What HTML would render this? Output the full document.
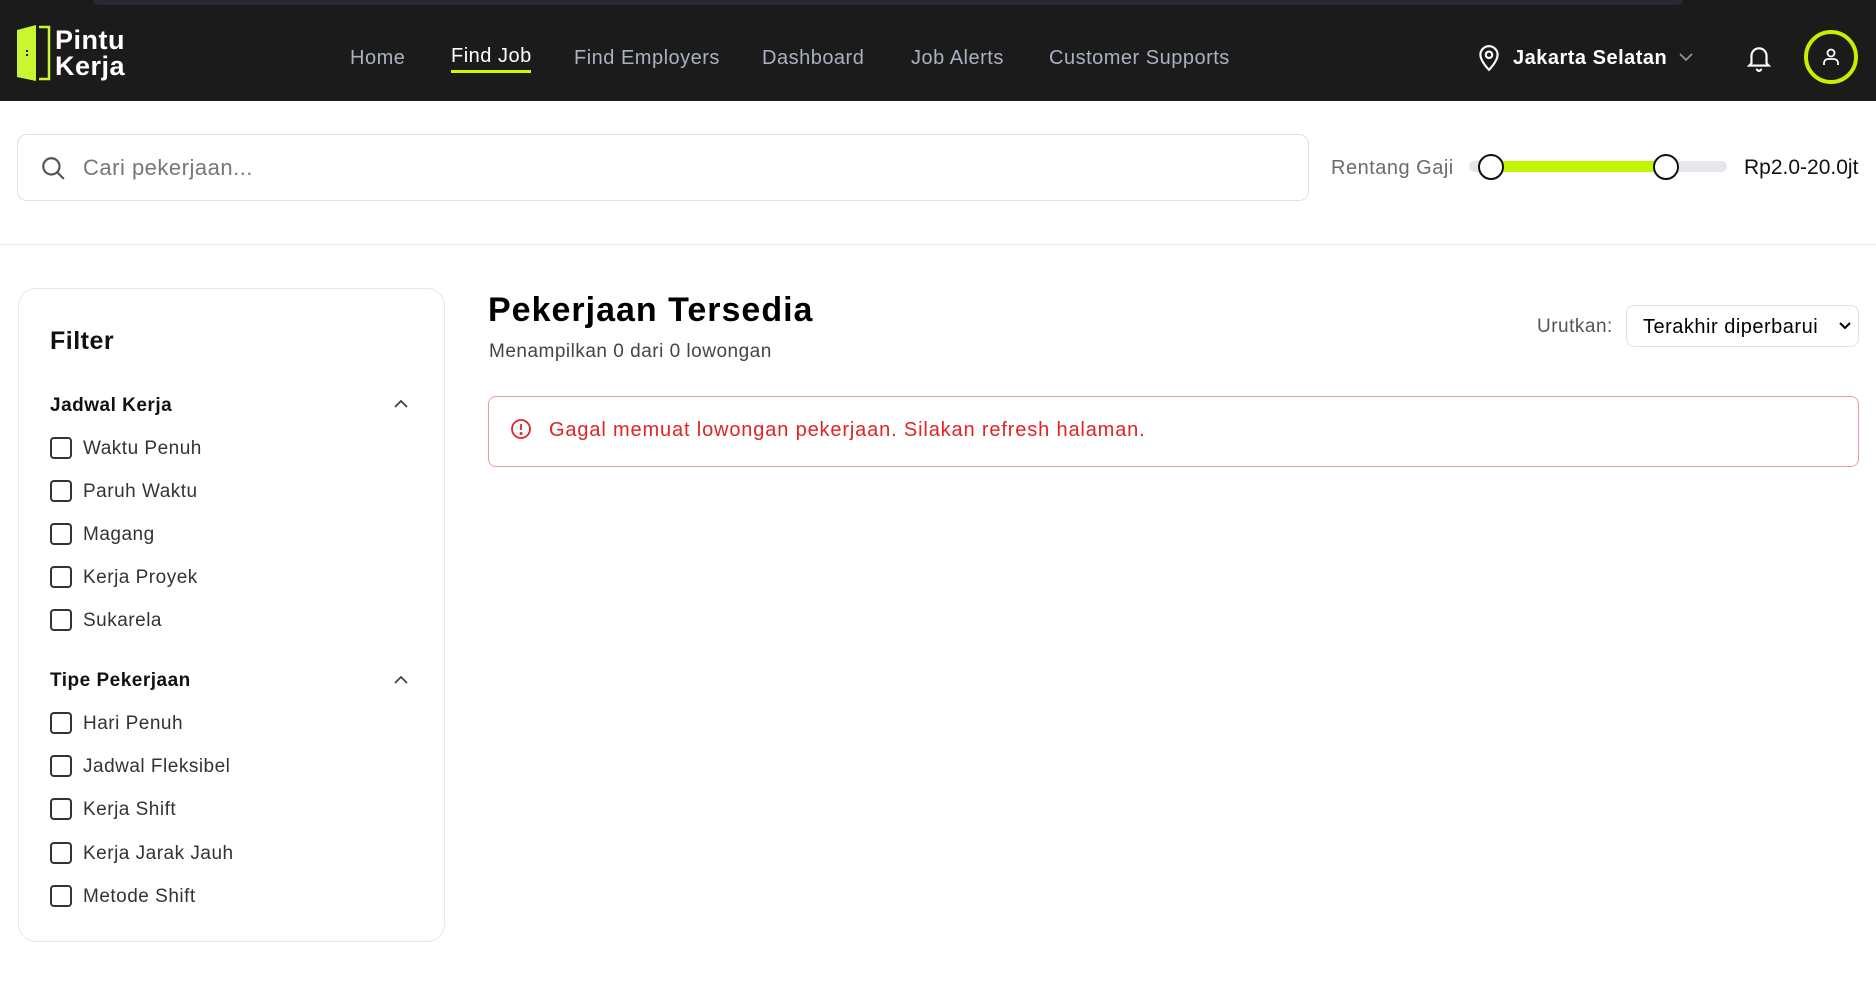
<!DOCTYPE html>
<html><head><meta charset="utf-8"><style>
*{box-sizing:border-box;margin:0;padding:0}
body{width:1876px;height:994px;background:#fff;font-family:"Liberation Sans",sans-serif;position:relative;overflow:hidden;color:#111;letter-spacing:0.5px}
.a{position:absolute;white-space:nowrap}
.hdr{position:absolute;left:0;top:0;width:1876px;height:101px;background:#1b1b1b}
.strip{position:absolute;left:93px;top:0;width:1590px;height:5px;background:#272a31;border-radius:0 0 6px 6px}
.nav{top:47px;font-size:20px;color:#a9b2c0}
.cb{position:absolute;left:50px;width:22px;height:22px;border:2px solid #333;border-radius:4px}
.lbl{left:83px;font-size:19px;color:#333;margin-top:1px}
</style></head><body>
<div class="hdr"><div class="strip"></div>
<svg class="a" style="left:16px;top:24px" width="40" height="58" viewBox="0 0 40 58"><path d="M1 6 L20 1 L20 57 L1 53Z" fill="#c9f531"/><rect x="10" y="26" width="2" height="2" fill="#1b1b1b"/><rect x="10" y="30" width="2" height="2" fill="#1b1b1b"/><path d="M23 3 H33 V55 H23" fill="none" stroke="#c9f531" stroke-width="2.5"/></svg>
<div class="a" style="left:55px;top:27px;font-size:27px;font-weight:bold;color:#fff;line-height:26px">Pintu<br>Kerja</div>
<div class="a nav" style="left:350px">Home</div>
<div class="a nav" style="left:451px;color:#fff;top:45px">Find Job</div>
<div class="a" style="left:451px;top:70px;width:80px;height:3px;background:#d4f500"></div>
<div class="a nav" style="left:574px">Find Employers</div>
<div class="a nav" style="left:762px">Dashboard</div>
<div class="a nav" style="left:911px">Job Alerts</div>
<div class="a nav" style="left:1049px">Customer Supports</div>
<svg class="a" style="left:1476px;top:44px" width="26" height="28" viewBox="0 0 24 26" fill="none" stroke="#fff" stroke-width="2"><path d="M12 24 C12 24 20 16 20 10 A8 8 0 0 0 4 10 C4 16 12 24 12 24Z"/><circle cx="12" cy="10" r="3"/></svg>
<div class="a" style="left:1513px;top:47px;font-size:20px;font-weight:bold;color:#fff">Jakarta Selatan</div>
<svg class="a" style="left:1678px;top:52px" width="16" height="10" viewBox="0 0 16 10" fill="none" stroke="#999" stroke-width="1.6"><path d="M2 2 L8 8 L14 2"/></svg>
<svg class="a" style="left:1746px;top:44px" width="26" height="28" viewBox="0 0 24 26" fill="none" stroke="#fff" stroke-width="2"><path d="M5 18 V11 A7 7 0 0 1 19 11 V18 L21 20 H3Z"/><path d="M10 23 A2 2 0 0 0 14 23"/></svg>
<div class="a" style="left:1804px;top:30px;width:54px;height:54px;border:4px solid #c6f000;border-radius:50%"></div>
<svg class="a" style="left:1822px;top:47px" width="18" height="20" viewBox="0 0 18 20" fill="none" stroke="#fff" stroke-width="1.8"><circle cx="9" cy="6" r="3.5"/><path d="M2 18 V16 A4 4 0 0 1 6 12 H12 A4 4 0 0 1 16 16 V18"/></svg>
</div>
<div class="a" style="left:17px;top:134px;width:1292px;height:67px;border:1px solid #dfe1e5;border-radius:10px"></div>
<svg class="a" style="left:40px;top:155px" width="26" height="26" viewBox="0 0 24 24" fill="none" stroke="#555" stroke-width="2"><circle cx="10.5" cy="10.5" r="7.5"/><path d="M16 16 L22 22"/></svg>
<div class="a" style="left:83px;top:155px;font-size:22px;color:#777">Cari pekerjaan...</div>
<div class="a" style="left:1331px;top:157px;font-size:20px;color:#6b6b6b">Rentang Gaji</div>
<div class="a" style="left:1469px;top:161px;width:258px;height:11px;background:#e5e7eb;border-radius:6px"></div>
<div class="a" style="left:1491px;top:161px;width:175px;height:11px;background:#c2f500"></div>
<div class="a" style="left:1478px;top:154px;width:26px;height:26px;border:2.5px solid #111;border-radius:50%;background:#fff"></div>
<div class="a" style="left:1653px;top:154px;width:26px;height:26px;border:2.5px solid #111;border-radius:50%;background:#fff"></div>
<div class="a" style="left:1744px;top:156px;font-size:21px;color:#111;letter-spacing:0">Rp2.0-20.0jt</div>
<div class="a" style="left:0;top:244px;width:1876px;height:1px;background:#e5e7eb"></div>
<div class="a" style="left:18px;top:288px;width:427px;height:654px;border:1px solid #e5e7eb;border-radius:18px"></div>
<div class="a" style="left:50px;top:327px;font-size:25px;font-weight:bold">Filter</div>
<div class="a" style="left:50px;top:395px;font-size:19px;font-weight:bold;color:#111">Jadwal Kerja</div>
<svg class="a" style="left:394px;top:399px" width="14" height="9" viewBox="0 0 14 9" fill="none" stroke="#444" stroke-width="1.8"><path d="M1 8 L7 2 L13 8"/></svg>
<div class="cb" style="top:437px"></div><div class="a lbl" style="top:437px">Waktu Penuh</div>
<div class="cb" style="top:480px"></div><div class="a lbl" style="top:480px">Paruh Waktu</div>
<div class="cb" style="top:523px"></div><div class="a lbl" style="top:523px">Magang</div>
<div class="cb" style="top:566px"></div><div class="a lbl" style="top:566px">Kerja Proyek</div>
<div class="cb" style="top:609px"></div><div class="a lbl" style="top:609px">Sukarela</div>
<div class="a" style="left:50px;top:670px;font-size:19px;font-weight:bold;color:#111">Tipe Pekerjaan</div>
<svg class="a" style="left:394px;top:675px" width="14" height="9" viewBox="0 0 14 9" fill="none" stroke="#444" stroke-width="1.8"><path d="M1 8 L7 2 L13 8"/></svg>
<div class="cb" style="top:712px"></div><div class="a lbl" style="top:712px">Hari Penuh</div>
<div class="cb" style="top:755px"></div><div class="a lbl" style="top:755px">Jadwal Fleksibel</div>
<div class="cb" style="top:798px"></div><div class="a lbl" style="top:798px">Kerja Shift</div>
<div class="cb" style="top:842px"></div><div class="a lbl" style="top:842px">Kerja Jarak Jauh</div>
<div class="cb" style="top:885px"></div><div class="a lbl" style="top:885px">Metode Shift</div>
<div class="a" style="left:488px;top:291px;font-size:34px;font-weight:bold;color:#000;letter-spacing:1px">Pekerjaan Tersedia</div>
<div class="a" style="left:489px;top:341px;font-size:19px;color:#444">Menampilkan 0 dari 0 lowongan</div>
<div class="a" style="left:1537px;top:316px;font-size:19px;color:#555">Urutkan:</div>
<div class="a" style="left:1626px;top:305px;width:233px;height:42px;border:1px solid #dfe1e5;border-radius:8px"></div>
<div class="a" style="left:1643px;top:316px;font-size:20px;color:#000">Terakhir diperbarui</div>
<svg class="a" style="left:1839px;top:322px" width="12" height="8" viewBox="0 0 12 8" fill="none" stroke="#000" stroke-width="2"><path d="M1 1 L6 6 L11 1"/></svg>
<div class="a" style="left:488px;top:396px;width:1371px;height:71px;border:1.5px solid #f19a9a;border-radius:8px"></div>
<svg class="a" style="left:510px;top:418px" width="22" height="22" viewBox="0 0 22 22" fill="none" stroke="#e02424" stroke-width="1.8"><circle cx="11" cy="11" r="9"/><path d="M11 6 V12"/><circle cx="11" cy="15.5" r="0.6" fill="#e02424"/></svg>
<div class="a" style="left:549px;top:419px;font-size:20px;color:#e02424;letter-spacing:0.85px">Gagal memuat lowongan pekerjaan. Silakan refresh halaman.</div>
</body></html>
